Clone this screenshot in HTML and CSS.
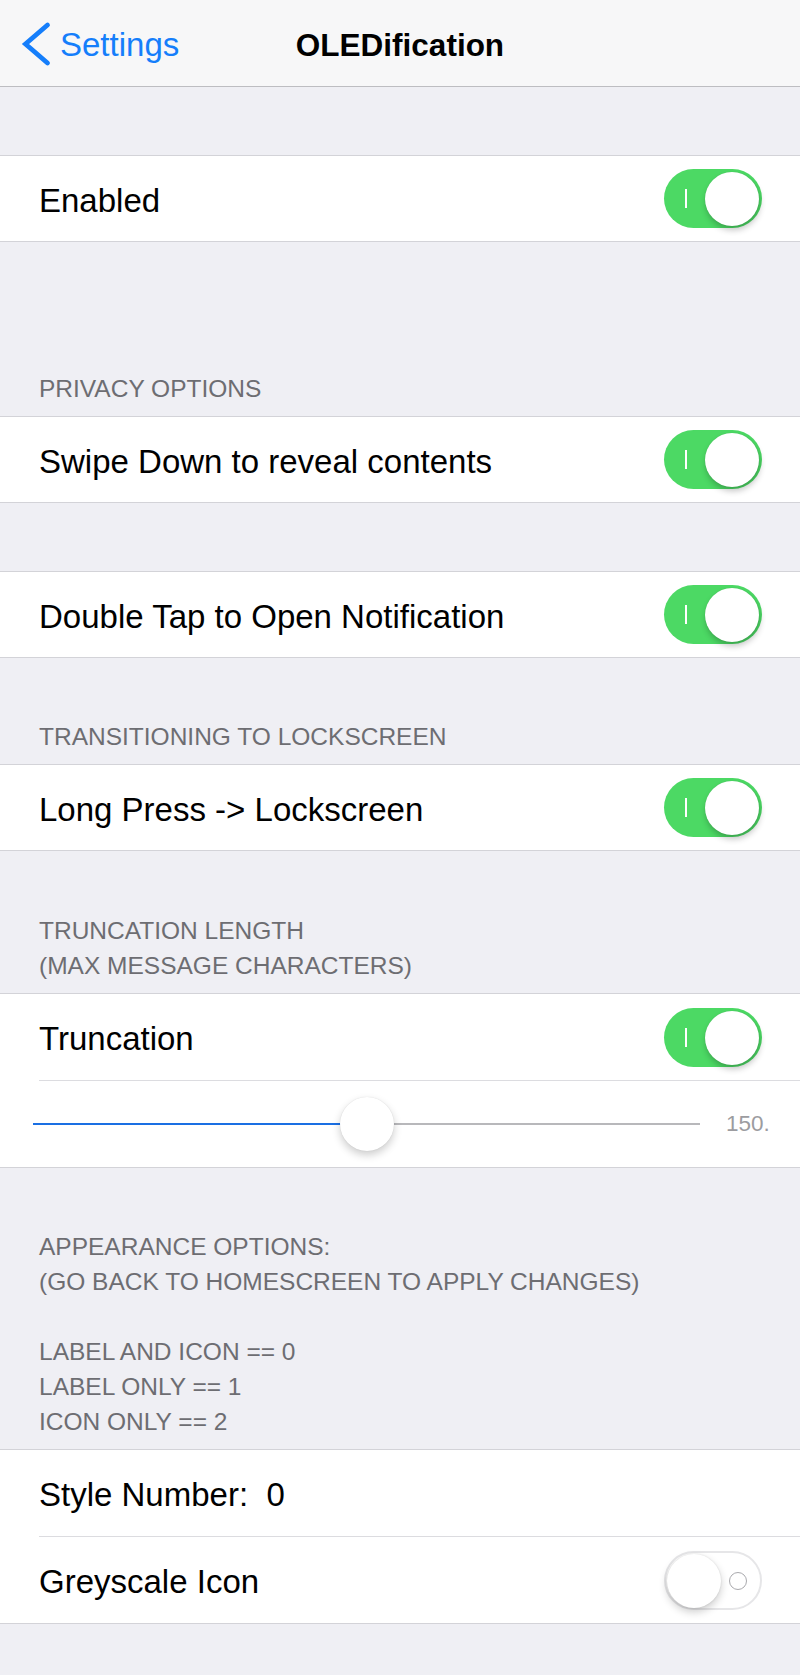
FILE: index.html
```html
<!DOCTYPE html>
<html>
<head>
<meta charset="utf-8">
<title>OLEDification</title>
<link rel="stylesheet" href="styles.css">
</head>
<body>
<header class="nav">
  <a class="back">
    <svg class="chevron" width="30" height="46" viewBox="0 0 30 46"><path d="M26.5 4 L4.5 23 L26.5 42" fill="none" stroke="#157efb" stroke-width="4.8" stroke-linecap="round" stroke-linejoin="miter"/></svg>
    <span class="back-label">Settings</span>
  </a>
  <h1 class="title">OLEDification</h1>
  <div class="nav-right"></div>
</header>

<section class="section s-first">
  <div class="group">
    <div class="row"><span class="label">Enabled</span><span class="switch on"><span class="mark-i"></span><span class="knob"></span></span></div>
  </div>
</section>

<section class="section s-privacy">
  <div class="header">PRIVACY OPTIONS</div>
  <div class="group">
    <div class="row"><span class="label">Swipe Down to reveal contents</span><span class="switch on"><span class="mark-i"></span><span class="knob"></span></span></div>
  </div>
</section>

<section class="section s-plain">
  <div class="group">
    <div class="row"><span class="label">Double Tap to Open Notification</span><span class="switch on"><span class="mark-i"></span><span class="knob"></span></span></div>
  </div>
</section>

<section class="section s-head">
  <div class="header">TRANSITIONING TO LOCKSCREEN</div>
  <div class="group">
    <div class="row"><span class="label">Long Press -&gt; Lockscreen</span><span class="switch on"><span class="mark-i"></span><span class="knob"></span></span></div>
  </div>
</section>

<section class="section s-head s-trunc">
  <div class="header">TRUNCATION LENGTH<br>(MAX MESSAGE CHARACTERS)</div>
  <div class="group">
    <div class="row"><span class="label">Truncation</span><span class="switch on"><span class="mark-i"></span><span class="knob"></span></span></div>
    <div class="row slider-row">
      <div class="slider">
        <div class="track-fill" style="width:50%"></div>
        <div class="track-rest"></div>
        <div class="thumb" style="left:50%"></div>
      </div>
      <span class="slider-value">150.</span>
    </div>
  </div>
</section>

<section class="section s-head">
  <div class="header">APPEARANCE OPTIONS:<br>(GO BACK TO HOMESCREEN TO APPLY CHANGES)<br><br>LABEL AND ICON == 0<br>LABEL ONLY == 1<br>ICON ONLY == 2</div>
  <div class="group">
    <div class="row"><span class="label">Style Number:&nbsp; 0</span></div>
    <div class="row"><span class="label">Greyscale Icon</span><span class="switch off"><span class="knob"></span><span class="mark-o"></span></span></div>
  </div>
</section>
</body>
</html>
```

FILE: styles.css
```css
* { box-sizing: border-box; }

html, body {
  margin: 0;
  padding: 0;
}

body {
  background: #efeff4;
  font-family: "Liberation Sans", Arial, sans-serif;
  color: #000;
  width: 800px;
  min-height: 1675px;
}

.nav {
  height: 87px;
  background: #f7f7f8;
  border-bottom: 1px solid #bdbdc1;
  display: grid;
  grid-template-columns: 1fr auto 1fr;
  align-items: center;
  padding-top: 4px;
}

.back {
  display: flex;
  align-items: center;
  padding-left: 21px;
  color: #157efb;
  font-size: 33px;
}

.chevron {
  display: block;
  margin-right: 9px;
  margin-top: -3px;
}

.back-label {
  line-height: 40px;
}

.title {
  margin: 0;
  font-size: 31.5px;
  font-weight: bold;
  line-height: 40px;
  letter-spacing: 0;
}

.section.s-first { margin-top: 68px; }
.section.s-privacy { margin-top: 129px; }
.section.s-plain { margin-top: 68px; }
.section.s-head { margin-top: 61px; }
.section.s-trunc { margin-top: 62px; }

.header {
  padding: 0 38px 10px 39px;
  font-size: 24.5px;
  line-height: 35px;
  color: #6d6d72;
}

.group {
  background: #fff;
  border-top: 1px solid #d3d3d8;
  border-bottom: 1px solid #d3d3d8;
}

.row {
  height: 86px;
  margin-left: 39px;
  padding-right: 38px;
  display: flex;
  align-items: center;
  justify-content: space-between;
}

.row:only-child {
  height: 85px;
}

.row + .row {
  height: 87px;
  border-top: 1px solid #dcdce0;
}

.label {
  font-size: 33px;
  line-height: 40px;
  padding-top: 4px;
  white-space: pre;
}

.switch {
  position: relative;
  flex: 0 0 auto;
  width: 98px;
  height: 59px;
  border-radius: 30px;
}

.switch.on {
  background: #4cd964;
}

.switch.off {
  background: #fff;
  border: 2px solid #e6e6e8;
}

.switch .knob {
  position: absolute;
  width: 54px;
  height: 54px;
  border-radius: 50%;
  background: #fff;
  box-shadow: 1px 4px 6px rgba(0, 0, 0, 0.24), 0 0 1px rgba(0, 0, 0, 0.12);
}

.switch.on .knob {
  top: 3px;
  right: 3px;
}

.switch.off .knob {
  top: 1px;
  left: 1px;
  box-shadow: 0 4px 8px rgba(0, 0, 0, 0.2), 0 0 2px rgba(0, 0, 0, 0.12);
}

.mark-i {
  position: absolute;
  left: 21px;
  top: 20px;
  width: 2px;
  height: 19px;
  background: #fff;
}

.mark-o {
  position: absolute;
  left: 63px;
  top: 19px;
  width: 18px;
  height: 18px;
  border-radius: 50%;
  border: 1.6px solid #a9a9ad;
}

.slider-row {
  justify-content: flex-start;
  padding-right: 0;
}

.slider {
  position: relative;
  margin-left: -6px;
  width: 667px;
  height: 54px;
  display: flex;
  align-items: center;
  margin-top: -1px;
}

.track-fill {
  height: 2px;
  background: #1a6fe3;
}

.track-rest {
  flex: 1;
  height: 2px;
  background: #b8b8bb;
}

.thumb {
  position: absolute;
  top: 0;
  width: 54px;
  height: 54px;
  margin-left: -27px;
  border-radius: 50%;
  background: #fff;
  box-shadow: 0 4px 9px rgba(0, 0, 0, 0.2), 0 0 1px rgba(0, 0, 0, 0.15);
}

.slider-value {
  margin-left: 26px;
  font-size: 22.5px;
  color: #9c9ca0;
}
```
